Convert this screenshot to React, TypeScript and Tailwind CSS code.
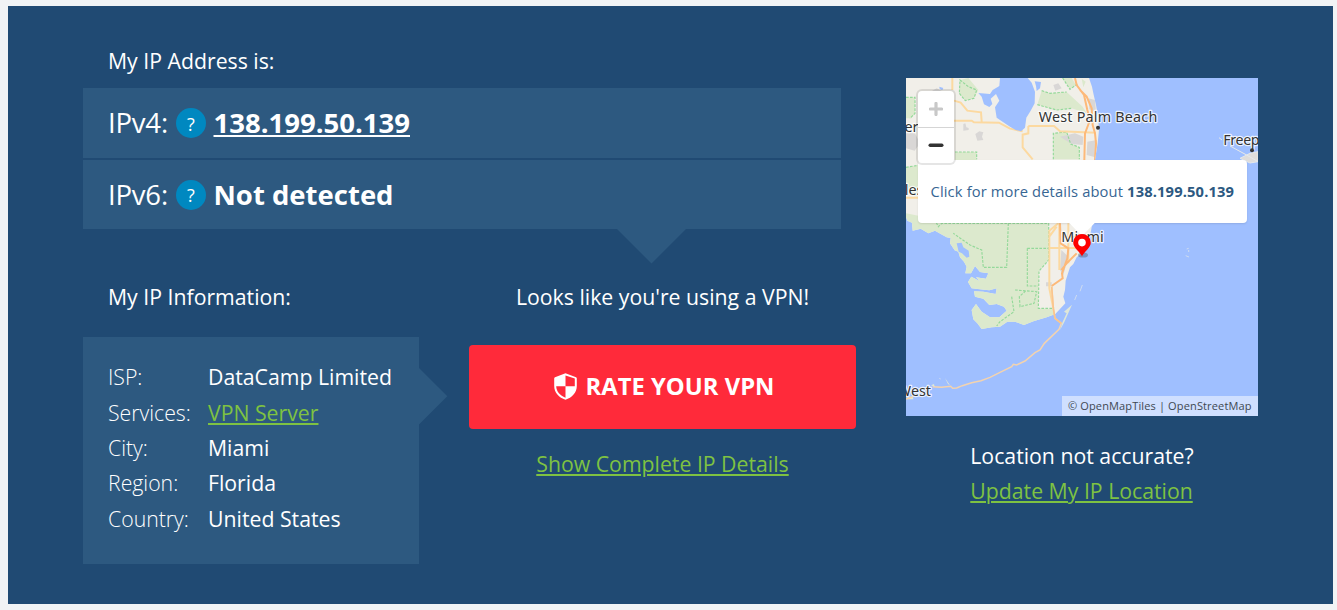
import React from 'react';

const info = [
  { label: 'ISP:', value: 'DataCamp Limited' },
  { label: 'Services:', value: 'VPN Server', link: true },
  { label: 'City:', value: 'Miami' },
  { label: 'Region:', value: 'Florida' },
  { label: 'Country:', value: 'United States' },
];

function Help() {
  return (
    <span className="flex h-[30px] w-[30px] items-center justify-center rounded-full bg-[#0088c0] pt-[1px] text-[18px] leading-none">
      ?
    </span>
  );
}

function Shield() {
  return (
    <svg width="23" height="27" viewBox="0 0 23 27" className="shrink-0">
      <path
        d="M11.5 0.3 L22 4.2 Q22.8 4.5 22.8 5.4 V13 C22.8 19.8 18 24.6 11.5 26.8 C5 24.6 0.2 19.8 0.2 13 V5.4 Q0.2 4.5 1 4.2 Z M11.5 2.4 V13.3 H20.8 V5.5 Z M11.5 13.3 H2.2 C2.4 18.8 6.2 22.7 11.5 24.7 Z"
        fill="#fff"
        fillRule="evenodd"
      />
    </svg>
  );
}

function Terrain() {
  return (
    <svg width="352" height="338" viewBox="18 24 1056 1014" className="block">
      <defs>
        <clipPath id="land">
          <path d="M18 24 H567 L576 50 580 70 588 105 594 140 597 180 593 220 585 270 578 400 577 460 570 500 558 520 545 550 530 562 520 582 510 592 497 632 495 660 490 680 496 700 482 715 466 732 440 742 400 754 372 765 345 755 322 755 300 770 275 772 245 777 232 760 220 748 215 720 228 702 245 725 270 742 298 742 320 722 312 710 290 702 268 705 250 686 225 680 222 664 250 665 287 672 290 655 268 661 240 658 215 655 204 636 214 620 240 634 228 622 258 626 265 610 240 606 225 588 213 610 196 610 200 590 192 575 180 562 175 545 164 541 150 520 152 504 140 502 105 482 85 490 62 476 38 482 36 458 22 452 18 440 Z" />
        </clipPath>
      </defs>
      <rect x="18" y="24" width="1056" height="1014" fill="#9fbfff" />
      <g clipPath="url(#land)">
        <rect x="18" y="24" width="600" height="780" fill="#f1efe9" />
        <g fill="#dce9cd">
          <path d="M18 430 L70 440 100 455 150 460 445 458 445 570 417 603 415 715 462 718 470 800 180 800 18 600 Z" />
          <path d="M18 82 H45 V130 L34 145 H18 Z M180 30 L205 24 235 60 222 85 196 92 178 70 Z" />
          <path d="M425 62 L450 70 500 66 548 110 560 130 515 115 470 120 412 104 Z" />
          <path d="M460 190 L500 186 512 222 538 232 540 268 H460 Z M165 246 H230 V270 H165 Z M18 292 L60 285 75 370 40 378 18 350 Z" />
          <path d="M488 24 H515 L528 45 510 58 Z M545 26 L557 35 550 52 Z" />
        </g>
        <g fill="#d9d7d6">
          <path d="M18 190 H45 L60 220 44 242 18 235 Z M75 75 L110 55 130 65 105 100 Z M190 162 l6 -2 3 12 7 2 v6 l-16 2 Z M226 192 L238 184 250 187 246 200 250 210 232 212 Z M480 200 L525 190 550 200 548 225 515 222 Z M565 85 L585 90 588 125 568 118 Z M562 215 L591 210 586 262 560 255 Z M484 540 L505 560 490 615 480 600 Z M438 637 h17 v12 h-17 Z M460 45 L475 40 485 55 466 62 Z" />
        </g>
        <g fill="none" stroke="#94d99a" strokeWidth="3.5" strokeDasharray="8 4">
          <path d="M18 82 H45 V130 L30 145 M180 30 L205 50 230 60 222 85 196 92 178 70 Z M425 62 L450 70 500 66 M412 104 L470 120 515 115 M488 24 L510 58 532 42" />
          <path d="M460 268 V190 L500 186 512 222 538 232 V268 M165 246 H230 V268 M18 292 L60 285 M70 432 L105 450 115 470 125 460 H446 V570 L417 603 415 715 H462 M325 460 L320 592 H250 L245 540 210 525 160 490 M382 535 V648 H414 M382 535 H445 M345 660 L410 665 402 700 360 710 358 680 380 660 M335 680 L342 725 300 755 290 768" />
        </g>
        <g fill="none" stroke="#fcd9a0" strokeWidth="6">
          <path d="M157 24 V60 M162 92 L182 98 202 122 243 127 245 155 M162 152 H215 L222 157 297 158 330 176 368 184 M385 168 V190 L368 194 V232 L398 268 M385 168 H462 L480 184 588 188" />
          <path d="M18 383 H60 M448 560 V482 L475 460 M448 534 H540 M448 560 V655 L460 715 M478 460 V600 M448 500 L470 470 M505 460 V580" />
        </g>
        <g fill="none" stroke="#fdb979" strokeWidth="6">
          <path d="M525 24 L530 45 552 75 562 120 570 150 555 190 553 270 M540 60 L560 80 575 115 578 165 585 190 588 220 585 270 M480 460 L482 520 505 535 502 565 486 610 488 625 455 648 M530 550 L500 580 484 600 M488 500 H532" />
        </g>
      </g>
      <path
        fill="#9fbfff"
        d="M300 24 L298 48 278 60 270 72 235 69 245 80 252 103 268 111 277 102 272 86 288 72 298 92 285 112 290 143 330 170 347 180 363 184 375 173 379 143 392 122 404 100 405 65 395 38 383 24 Z M404 34 L423 36 420 55 410 63 408 48 Z M118 50 L130 54 127 60 119 57 Z M170 520 L185 518 190 532 206 542 208 560 200 563 186 550 176 545 Z"
      />
      <path d="M455 650 L460 715 465 745 484 760 477 778 433 820 420 840 405 848 375 873 350 885 340 883 335 890 300 907 270 922 243 932 215 938 187 947 170 954 158 955 152 949 125 952 98 950" fill="none" stroke="#f3d3af" strokeWidth="4.5" />
      <path d="M455 650 L460 715 465 745 484 760" fill="none" stroke="#fbc58c" strokeWidth="5" />
      <path d="M480 780 L488 755 500 730 492 725 516 704 508 722 492 758 Z M20 983 L38 978 40 988 22 988 Z M135 924 L150 946 144 942 Z M93 946 L102 942 104 950 Z" fill="#dfe7d8" />
      <path d="M18 987 L40 980" fill="none" stroke="#fbd3a2" strokeWidth="4" />
      <path d="M524 690 L530 675 M540 664 L547 645 M118 925 l4 2 M860 537 l6 -2 M857 557 l10 4 M866 540 v6" stroke="#cfdcf0" strokeWidth="3" />
      <path d="M957 203 L966 210 M990 228 L1040 255 1074 275 M1020 265 L1050 250 1074 245 V275 L1050 279 Z" stroke="#e5e8ea" strokeWidth="3" fill="#dfdddb" />
      <g
        fontFamily="'Noto Sans', 'Open Sans', sans-serif"
        fontSize="43"
        fill="#333"
        stroke="#fff"
        strokeOpacity="0.8"
        strokeWidth="7"
        strokeLinejoin="round"
        paintOrder="stroke"
      >
        <text x="416" y="157" textLength="356">West Palm Beach</text>
        <text x="970" y="226" textLength="164">Freeport</text>
        <text x="484" y="515" textLength="127">Miami</text>
        <text x="76" y="186" textAnchor="end">Fort Myers</text>
        <text x="70" y="375" textAnchor="end">Naples</text>
        <text x="93" y="977" textAnchor="end">Key West</text>
      </g>
      <circle cx="594" cy="173" r="6" fill="#333" />
      <circle cx="1056" cy="241" r="6" fill="#333" />
    </svg>
  );
}

function MapCard() {
  return (
    <div className="relative h-[338px] w-[352px] overflow-hidden">
      <Terrain />
      <div className="absolute left-[12px] top-[82px] flex h-[63px] w-[329px] items-center rounded-[4px] bg-white pl-[12.5px] text-[14.7px] text-[#376693] shadow-[0_1px_2px_rgba(0,0,0,0.1)]">
        <span className="whitespace-nowrap tracking-[0.15px]">
          Click for more details about <b className="text-[#2c5981]">138.199.50.139</b>
        </span>
      </div>
      <svg className="absolute left-[162px] top-[144px]" width="30" height="38" viewBox="0 0 30 38">
        <path d="M1 0.8 H27 L14 14 Z" fill="#fff" />
        <ellipse cx="15" cy="33" rx="5" ry="2.6" fill="#456" opacity="0.4" />
        <path d="M14 34.5 C12.5 30 5.2 26 5.2 20.4 A8.8 8.3 0 0 1 22.8 20.4 C22.8 26 15.5 30 14 34.5 Z" fill="#fe0000" />
        <circle cx="14" cy="20.6" r="3.8" fill="#fff" />
      </svg>
      <div className="absolute left-[12px] top-[13px] flex h-[72px] w-[36px] flex-col rounded-[4px] bg-white shadow-[0_0_0_2px_rgba(0,0,0,0.1)]">
        <div className="flex flex-1 items-center justify-center border-b border-[#d5d5d5]">
          <svg width="14" height="14" viewBox="0 0 14 14">
            <path d="M7 1.4V12.6M1.4 7H12.6" stroke="#c8c8c8" strokeWidth="3.2" strokeLinecap="round" />
          </svg>
        </div>
        <div className="flex flex-1 items-center justify-center">
          <svg width="16" height="14" viewBox="0 0 16 14">
            <path d="M2.2 7.3H13.8" stroke="#333" strokeWidth="3.4" strokeLinecap="round" />
          </svg>
        </div>
      </div>
      <div className="absolute bottom-0 right-0 flex h-[20px] w-[196px] items-center whitespace-nowrap bg-white/50 pl-[6px] text-[11px] tracking-[0.14px] text-[#404952]">
        © OpenMapTiles | OpenStreetMap
      </div>
    </div>
  );
}

export default function App() {
  return (
    <div className="h-[610px] w-[1337px] overflow-hidden bg-[#f1f3f5] pl-[8px] pr-[4px] pt-[6px] font-['Open_Sans',sans-serif] text-[21.25px] text-white">
      <main className="flex h-[598px] bg-[#204a73] pl-[75px]">
        <section className="w-[773px] pt-[40px]">
          <h2 className="flex h-[42px] items-start pl-[25px] leading-[30px]">My IP Address is:</h2>
          <div className="relative flex w-[758px] flex-col gap-[2px]">
            <div className="flex h-[70px] items-center bg-[#2d5980] pl-[25px] text-[27.5px]">
              <span className="w-[68px] tracking-[-0.2px]">IPv4:</span>
              <Help />
              <a className="ml-[7.5px] font-bold underline decoration-2 underline-offset-[2px]">138.199.50.139</a>
            </div>
            <div className="flex h-[69px] items-center bg-[#2d5980] pl-[25px] text-[27.5px]">
              <span className="w-[68px] tracking-[-0.2px]">IPv6:</span>
              <Help />
              <b className="ml-[7.5px]">Not detected</b>
            </div>
            <svg className="absolute left-[534px] top-[141px]" width="70" height="35">
              <path d="M0 0H69L34.5 34.5Z" fill="#2d5980" />
            </svg>
          </div>
          <div className="flex">
            <div className="w-[386px] pt-[53px]">
              <h2 className="h-[55px] pl-[25px] leading-[30px]">My IP Information:</h2>
              <div className="relative h-[227px] w-[336px] bg-[#2d5980] pl-[25px] pt-[22px]">
                {info.map((row) => (
                  <div key={row.label} className="flex h-[35.4px] items-center whitespace-nowrap leading-[35px]">
                    <span className="w-[100px] font-light">{row.label}</span>
                    {row.link ? (
                      <a className="text-[#7ec242] underline decoration-2 underline-offset-[2px]">{row.value}</a>
                    ) : (
                      <span>{row.value}</span>
                    )}
                  </div>
                ))}
                <svg className="absolute left-[336px] top-[31px]" width="29" height="57">
                  <path d="M0 0L28.3 28.3L0 56.6Z" fill="#2d5980" />
                </svg>
              </div>
            </div>
            <div className="flex w-[387px] flex-col items-center pt-[53px]">
              <h2 className="h-[63px] leading-[30px]">Looks like you're using a VPN!</h2>
              <button className="flex h-[84px] w-[387px] items-center justify-center gap-[9px] rounded-[4px] bg-[#ff2a3a] pb-[2px] pl-[3px] text-[23.8px] font-bold">
                <Shield />
                <span className="pt-[1px]">RATE YOUR VPN</span>
              </button>
              <a className="mt-[20px] leading-[30px] text-[#7ec242] underline decoration-2 underline-offset-[2px]">
                Show Complete IP Details
              </a>
            </div>
          </div>
        </section>
        <aside className="ml-[50px] flex w-[352px] flex-col items-center pt-[72px]">
          <MapCard />
          <div className="flex flex-col pt-[22px] leading-[35px]">
            <span>Location not accurate?</span>
            <a className="text-[#7ec242] underline decoration-2 underline-offset-[2px]">Update My IP Location</a>
          </div>
        </aside>
      </main>
    </div>
  );
}
